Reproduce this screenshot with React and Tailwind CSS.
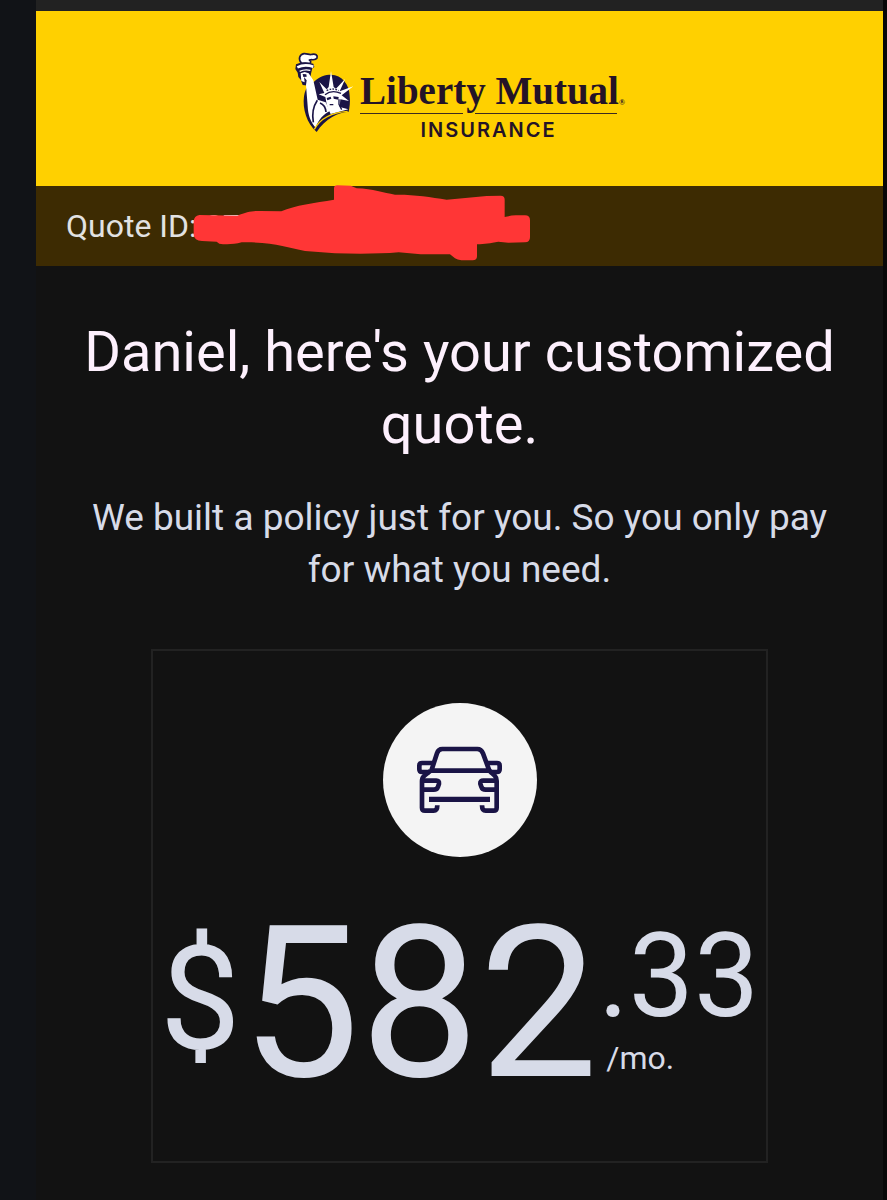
import React from 'react';

const quote = {
    name: 'Daniel',
    id: '27',
    dollars: '582',
    cents: '.33',
};

function StatueMark() {
    return (
        <svg viewBox="40 30 186 246" className="w-[62px] h-[82px] shrink-0" aria-hidden="true">
            <path
                fill="#1a1446"
                d="M100 122C116 106 134 101 151 101C184 102 206 130 207 164C209 184 207 198 204 212C174 213 134 232 108 273C78 247 65 204 70 166C72 150 78 139 86 131Z"
            />
            {/* flame */}
            <path
                fill="#ffffff"
                stroke="#1a1446"
                strokeWidth="5"
                strokeLinejoin="round"
                d="M62 66C52 54 56 41 70 38C80 37 86 43 94 40C104 37 112 43 109 51C104 60 94 54 86 57C91 60 91 64 88 68Z"
            />
            {/* torch */}
            <path fill="#1a1446" d="M46 70Q70 58 98 68L101 78L95 82L92 94L84 134L66 132L60 116L53 108L51 95L44 84Z" />
            <path fill="none" stroke="#ffffff" strokeWidth="8" d="M50 79Q72 68 98 77" />
            <path fill="none" stroke="#ffffff" strokeWidth="4" d="M57 91Q72 84 89 88" />
            {/* raised arm */}
            <path
                fill="#ffffff"
                d="M60 97L72 93L84 97L98 118L111 176L135 184L148 210C128 220 115 234 105 260C90 244 82 222 81 195L76 132L78 118L70 108L72 124L62 120Z"
            />
            <path fill="#1a1446" d="M66 99L77 100L78 107L68 108Z" />
            <path fill="none" stroke="#1a1446" strokeWidth="5" d="M110 178C98 196 93 216 98 244M118 186C129 190 135 202 136 213" />
            {/* crown and face */}
            <path
                fill="#ffffff"
                d="M144 138L151 90L159 138L166 143L194 113L177 151L218 136L183 163L205 180L179 175L177 198L203 205L150 219L143 205L138 189L134 168L114 160L131 156L116 123L138 145Z"
            />
            <path fill="none" stroke="#1a1446" strokeWidth="4" d="M133 161Q153 145 181 157" />
            <path fill="none" stroke="#1a1446" strokeWidth="4" strokeDasharray="5 4" d="M138 149Q156 139 174 149" />
            <path fill="#1a1446" d="M138 171L150 167L152 173L140 178ZM158 166L174 168L173 176L159 173Z" />
            <path fill="none" stroke="#1a1446" strokeWidth="4" d="M147 191H158M175 175V190L183 206" />
            <path fill="none" stroke="#ffd000" strokeWidth="4" d="M101 265C118 234 154 214 201 211" />
        </svg>
    );
}

function Logo() {
    return (
        <div className="flex items-start text-[#241327]">
            <StatueMark />
            <div className="ml-1">
                <div className="flex items-end pt-5 font-['Liberation_Serif',serif] font-bold">
                    <span className="text-[39px] leading-[40px]">Liberty Mutual</span>
                    <span className="text-[8px] leading-4">®</span>
                </div>
                <div className="flex gap-3 pt-0.5 pr-2">
                    <span className="h-px w-2/5 bg-[#3d2a20]"></span>
                    <span className="h-px flex-1 bg-[#3d2a20]"></span>
                </div>
                <div className="mt-1.5 pr-2 text-center font-[Inter,sans-serif] text-[20px] leading-5 font-semibold tracking-widest">
                    INSURANCE
                </div>
            </div>
        </div>
    );
}

function Redaction() {
    return (
        <svg viewBox="40 28 1012 228" className="absolute left-[157px] -top-px w-[338px] h-[76px]" aria-hidden="true">
            <path
                fill="#ff3636"
                d="M58 118L172 120C200 109 215 105 240 106L304 107C345 88 405 82 462 72V38Q462 29 472 29L512 30L530 38C580 39 610 52 645 57C700 56 750 64 800 72L920 61L962 60Q974 60 974 72V124C990 119 1010 119 1035 119Q1050 119 1050 134V185Q1050 200 1035 200L985 201L955 198C930 203 915 204 891 206V242Q891 254 878 254L844 254Q832 253 825 248L810 236L722 236L656 230C600 235 530 235 465 233L375 226C320 215 280 198 185 200C160 207 135 207 118 204L110 198L66 196Q42 194 41 177V138Q42 120 58 118Z"
            />
        </svg>
    );
}

function CarIcon() {
    return (
        <svg viewBox="0 0 540 540" className="w-[180px] h-[180px] shrink-0" fill="none" stroke="#1a1446" strokeWidth="14" aria-hidden="true">
            <path d="M184 242L201 190Q205 177 217 177H322Q334 177 339 190L358 242Z" strokeLinejoin="round" />
            <path d="M190 219H156Q148 219 148 227V238Q148 246 156 246H180M349 219H381Q389 219 389 227V238Q389 246 381 246H359" />
            <path d="M181 243L163 257Q156 263 156 273V353Q156 362 165 362H191Q202 362 202 346M359 243L374 257Q380 263 380 273V353Q380 362 371 362H347Q336 362 336 346" />
            <path d="M156 272H199Q208 272 207 281L204 290Q201 299 191 299H156M380 272H340Q330 272 331 281L334 290Q337 299 347 299H380" />
            <path d="M177 328H360" strokeWidth="16" />
        </svg>
    );
}

function PriceCard() {
    return (
        <section className="mx-[115px] mt-[53px] flex flex-col items-center border-2 border-[#222222] pt-[52px] pb-[51px]">
            <div className="flex size-[154px] items-center justify-center rounded-full bg-[#f4f4f4]">
                <CarIcon />
            </div>
            <div className="mt-[41px] flex items-start text-[#d7dbe8]">
                <span className="mt-[30px] text-[144px] leading-none">$</span>
                <span className="text-[212px] leading-none">{quote.dollars}</span>
                <div className="mt-5">
                    <div className="text-[116px] leading-none">{quote.cents}</div>
                    <div className="mt-2 ml-2 text-[32px] leading-none">/mo.</div>
                </div>
            </div>
        </section>
    );
}

function App() {
    return (
        <div className="flex min-h-screen bg-[#121212] font-[Roboto,sans-serif]">
            <div className="w-9 shrink-0 bg-[#111317]"></div>
            <main className="flex-1 pb-9">
                <div className="h-[11px] bg-[#222222]"></div>
                <header className="flex h-[175px] justify-center bg-[#ffd000] pt-10">
                    <Logo />
                </header>
                <div className="relative flex h-20 items-center bg-[#3d2b02] px-[30px] text-[32px] text-[#e2e2e2]">
                    <p>Quote ID: {quote.id}</p>
                    <Redaction />
                </div>
                <div className="px-10 pt-[50px] text-center">
                    <h1 className="text-[56px] leading-[72px] text-[#fdf0fd]">
                        {quote.name}, here's your customized quote.
                    </h1>
                    <p className="mt-8 text-[37px] leading-[52px] text-[#d7dbe8]">
                        We built a policy just for you. So you only pay for what you need.
                    </p>
                </div>
                <PriceCard />
            </main>
            <div className="w-1 shrink-0 bg-[#080808]"></div>
        </div>
    );
}

export default App;
